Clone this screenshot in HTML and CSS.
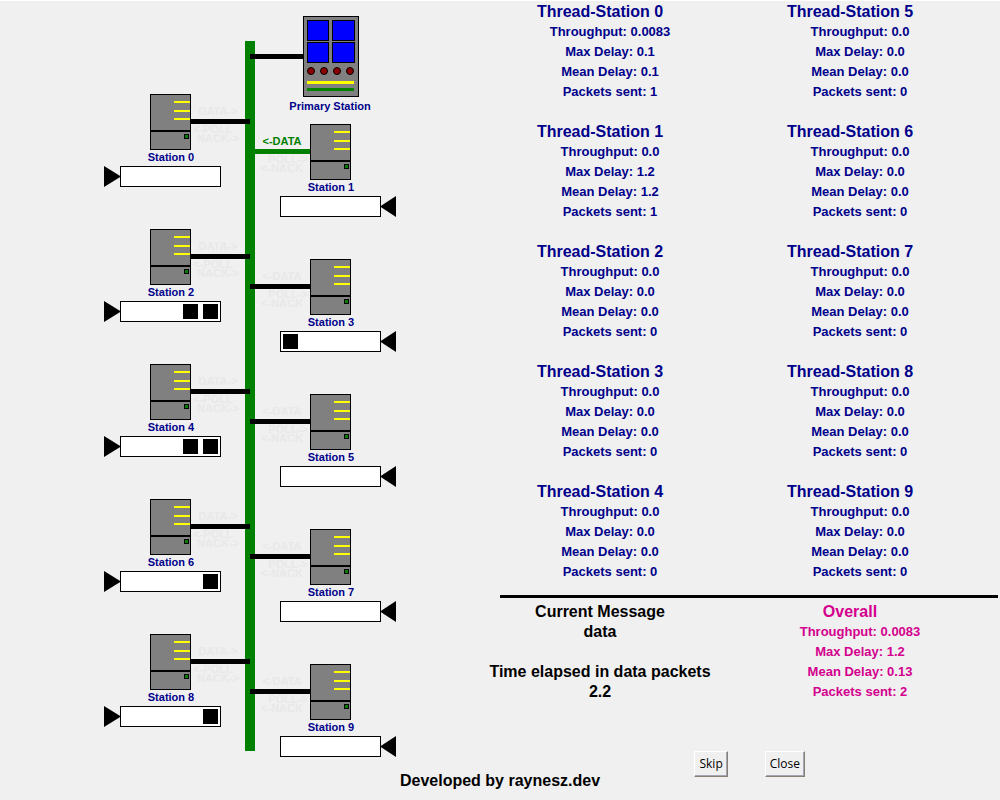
FILE: index.html
```html
<!DOCTYPE html>
<html lang="en">
<head>
<meta charset="utf-8">
<title>Polling Network Simulation</title>
<link rel="stylesheet" href="styles.css">
</head>
<body>
<main class="layout">
  <svg class="network" viewBox="0 1 475 758" role="img" aria-label="Network diagram">
    <defs>
      <g id="computer">
        <rect x=".5" y=".5" width="40" height="55" fill="#808080" stroke="#000"/>
        <path d="M0 37H41" stroke="#000" stroke-width="2"/>
        <path d="M24 8H40M24 17H40M24 25H40" stroke="#ff0" stroke-width="2"/>
        <rect x="34.5" y="40.5" width="4" height="4" fill="#008000" stroke="#000"/>
      </g>
      <g id="left-station">
        <use href="#computer"/>
        <rect x="-29.500" y="72.500" width="100" height="20" fill="#fff" stroke="#000"/>
        <path d="M-46 72L-29 82.500L-46 93Z"/>
      </g>
      <g id="right-station">
        <use href="#computer"/>
        <rect x="-29.500" y="72.500" width="100" height="20" fill="#fff" stroke="#000"/>
        <path d="M86 72L70 82.500L86 93Z"/>
      </g>
      <rect id="packet" y="75" width="15" height="15"/>
    </defs>

    <rect x="245" y="41" width="10" height="710" fill="#008000"/>

    <g>
      <path class="link" d="M250 56.500H303"/>
      <rect x="303.500" y="16.500" width="55" height="80" fill="#808080" stroke="#000"/>
      <g fill="#00f" stroke="#000">
        <rect x="307.500" y="20.500" width="21" height="20"/>
        <rect x="332.500" y="20.500" width="22" height="20"/>
        <rect x="307.500" y="42.500" width="21" height="20"/>
        <rect x="332.500" y="42.500" width="22" height="20"/>
      </g>
      <g fill="#8b0000" stroke="#000">
        <circle cx="311" cy="71" r="3.500"/><circle cx="324" cy="71" r="3.500"/>
        <circle cx="337" cy="71" r="3.500"/><circle cx="350" cy="71" r="3.500"/>
      </g>
      <path d="M307 82.500H354" stroke="#ff0" stroke-width="3"/>
      <path d="M307 89.500H354" stroke="#008000" stroke-width="3"/>
      <text class="name" x="330" y="110">Primary Station</text>
    </g>

    <g transform="translate(150 94)">
      <text class="idle" x="68" y="21">DATA-&gt;</text><text class="idle" x="63" y="39">&lt;-POLL</text><text class="idle" x="68" y="48">NACK-&gt;</text>
      <path class="link" d="M41 27.500H100"/><use href="#left-station"/>
      <text class="name" x="21" y="67">Station 0</text>
    </g>
    <g transform="translate(150 229)">
      <text class="idle" x="68" y="21">DATA-&gt;</text><text class="idle" x="63" y="39">&lt;-POLL</text><text class="idle" x="68" y="48">NACK-&gt;</text>
      <path class="link" d="M41 27.500H100"/><use href="#left-station"/>
      <use href="#packet" x="33"/><use href="#packet" x="53"/>
      <text class="name" x="21" y="67">Station 2</text>
    </g>
    <g transform="translate(150 364)">
      <text class="idle" x="68" y="21">DATA-&gt;</text><text class="idle" x="63" y="39">&lt;-POLL</text><text class="idle" x="68" y="48">NACK-&gt;</text>
      <path class="link" d="M41 27.500H100"/><use href="#left-station"/>
      <use href="#packet" x="33"/><use href="#packet" x="53"/>
      <text class="name" x="21" y="67">Station 4</text>
    </g>
    <g transform="translate(150 499)">
      <text class="idle" x="68" y="21">DATA-&gt;</text><text class="idle" x="63" y="39">&lt;-POLL</text><text class="idle" x="68" y="48">NACK-&gt;</text>
      <path class="link" d="M41 27.500H100"/><use href="#left-station"/>
      <use href="#packet" x="53"/>
      <text class="name" x="21" y="67">Station 6</text>
    </g>
    <g transform="translate(150 634)">
      <text class="idle" x="68" y="21">DATA-&gt;</text><text class="idle" x="63" y="39">&lt;-POLL</text><text class="idle" x="68" y="48">NACK-&gt;</text>
      <path class="link" d="M41 27.500H100"/><use href="#left-station"/>
      <use href="#packet" x="53"/>
      <text class="name" x="21" y="67">Station 8</text>
    </g>

    <g transform="translate(310 124)">
      <text class="active" x="-28" y="21">&lt;-DATA</text><text class="idle" x="-22" y="39">POLL-&gt;</text><text class="idle" x="-28" y="48">&lt;-NACK</text>
      <path class="link link-active" d="M-60 27.500H0"/><use href="#right-station"/>
      <text class="name" x="21" y="67">Station 1</text>
    </g>
    <g transform="translate(310 259)">
      <text class="idle" x="-28" y="21">&lt;-DATA</text><text class="idle" x="-22" y="39">POLL-&gt;</text><text class="idle" x="-28" y="48">&lt;-NACK</text>
      <path class="link" d="M-60 27.500H0"/><use href="#right-station"/>
      <use href="#packet" x="-27"/>
      <text class="name" x="21" y="67">Station 3</text>
    </g>
    <g transform="translate(310 394)">
      <text class="idle" x="-28" y="21">&lt;-DATA</text><text class="idle" x="-22" y="39">POLL-&gt;</text><text class="idle" x="-28" y="48">&lt;-NACK</text>
      <path class="link" d="M-60 27.500H0"/><use href="#right-station"/>
      <text class="name" x="21" y="67">Station 5</text>
    </g>
    <g transform="translate(310 529)">
      <text class="idle" x="-28" y="21">&lt;-DATA</text><text class="idle" x="-22" y="39">POLL-&gt;</text><text class="idle" x="-28" y="48">&lt;-NACK</text>
      <path class="link" d="M-60 27.500H0"/><use href="#right-station"/>
      <text class="name" x="21" y="67">Station 7</text>
    </g>
    <g transform="translate(310 664)">
      <text class="idle" x="-28" y="21">&lt;-DATA</text><text class="idle" x="-22" y="39">POLL-&gt;</text><text class="idle" x="-28" y="48">&lt;-NACK</text>
      <path class="link" d="M-60 27.500H0"/><use href="#right-station"/>
      <text class="name" x="21" y="67">Station 9</text>
    </g>
  </svg>

  <section class="panel">
    <div class="threads">
      <section class="stats"><h2>Thread-Station 0</h2><p>Throughput: 0.0083</p><p>Max Delay: 0.1</p><p>Mean Delay: 0.1</p><p>Packets sent: 1</p></section>
      <section class="stats"><h2>Thread-Station 1</h2><p>Throughput: 0.0</p><p>Max Delay: 1.2</p><p>Mean Delay: 1.2</p><p>Packets sent: 1</p></section>
      <section class="stats"><h2>Thread-Station 2</h2><p>Throughput: 0.0</p><p>Max Delay: 0.0</p><p>Mean Delay: 0.0</p><p>Packets sent: 0</p></section>
      <section class="stats"><h2>Thread-Station 3</h2><p>Throughput: 0.0</p><p>Max Delay: 0.0</p><p>Mean Delay: 0.0</p><p>Packets sent: 0</p></section>
      <section class="stats"><h2>Thread-Station 4</h2><p>Throughput: 0.0</p><p>Max Delay: 0.0</p><p>Mean Delay: 0.0</p><p>Packets sent: 0</p></section>
      <section class="stats"><h2>Thread-Station 5</h2><p>Throughput: 0.0</p><p>Max Delay: 0.0</p><p>Mean Delay: 0.0</p><p>Packets sent: 0</p></section>
      <section class="stats"><h2>Thread-Station 6</h2><p>Throughput: 0.0</p><p>Max Delay: 0.0</p><p>Mean Delay: 0.0</p><p>Packets sent: 0</p></section>
      <section class="stats"><h2>Thread-Station 7</h2><p>Throughput: 0.0</p><p>Max Delay: 0.0</p><p>Mean Delay: 0.0</p><p>Packets sent: 0</p></section>
      <section class="stats"><h2>Thread-Station 8</h2><p>Throughput: 0.0</p><p>Max Delay: 0.0</p><p>Mean Delay: 0.0</p><p>Packets sent: 0</p></section>
      <section class="stats"><h2>Thread-Station 9</h2><p>Throughput: 0.0</p><p>Max Delay: 0.0</p><p>Mean Delay: 0.0</p><p>Packets sent: 0</p></section>
    </div>
    <hr class="divider">
    <div class="summary">
      <div class="status">
        <div><h2>Current Message</h2><p>data</p></div>
        <div><h2>Time elapsed in data packets</h2><p>2.2</p></div>
      </div>
      <section class="stats overall"><h2>Overall</h2><p>Throughput: 0.0083</p><p>Max Delay: 1.2</p><p>Mean Delay: 0.13</p><p>Packets sent: 2</p></section>
    </div>
    <div class="actions">
      <button class="button" type="button">Skip</button>
      <button class="button" type="button">Close</button>
    </div>
  </section>
</main>
<footer class="credit">Developed by raynesz.dev</footer>
</body>
</html>
```

FILE: styles.css
```css
* { box-sizing: border-box; }

body {
  margin: 0;
  border-top: 1px solid #fff;
  background: #f0f0f0;
  color: #000;
  font: bold 16px/20px "Liberation Sans", Arial, sans-serif;
}

h2, p { margin: 0; font-size: inherit; }

.layout {
  display: grid;
  grid-template-columns: 19fr 21fr;
  align-items: start;
}

.network { display: block; width: 100%; height: auto; }
.network text { font-size: 11px; text-anchor: middle; }
.network .name { fill: #00008b; }
.network .idle { fill: #e8e8e8; }
.network .active { fill: #008000; }
.link { stroke: #000; stroke-width: 5px; }
.link-active { stroke: #008000; }

.panel { padding: 1px 25px 0 0; text-align: center; }

.threads {
  display: grid;
  grid-template-columns: 1fr 1fr;
  grid-template-rows: repeat(5, auto);
  grid-auto-flow: column;
  row-gap: 20px;
}

.stats { color: #00008b; }
.stats p { padding-left: 20px; font-size: 13px; }
.overall { color: #d4008e; }

.divider {
  height: 3px;
  margin: 13px -23px 4px 25px;
  border: 0;
  background: #000;
}

.summary { display: grid; grid-template-columns: 1fr 1fr; }
.status { display: grid; row-gap: 20px; align-content: start; }

.actions {
  display: flex;
  justify-content: flex-end;
  gap: 37px;
  margin-top: 49px;
  padding-right: 170px;
}

.button {
  padding: 3px 4px;
  border: 1px solid;
  border-color: #fff #857f74 #857f74 #fff;
  border-radius: 0;
  background: #f0f0f0;
  box-shadow: inset -1px -1px #a5a5b5;
  color: #000;
  font: 12px/18px "Open Sans", "Noto Sans", sans-serif;
}

.credit { margin-top: -6px; text-align: center; }
```
